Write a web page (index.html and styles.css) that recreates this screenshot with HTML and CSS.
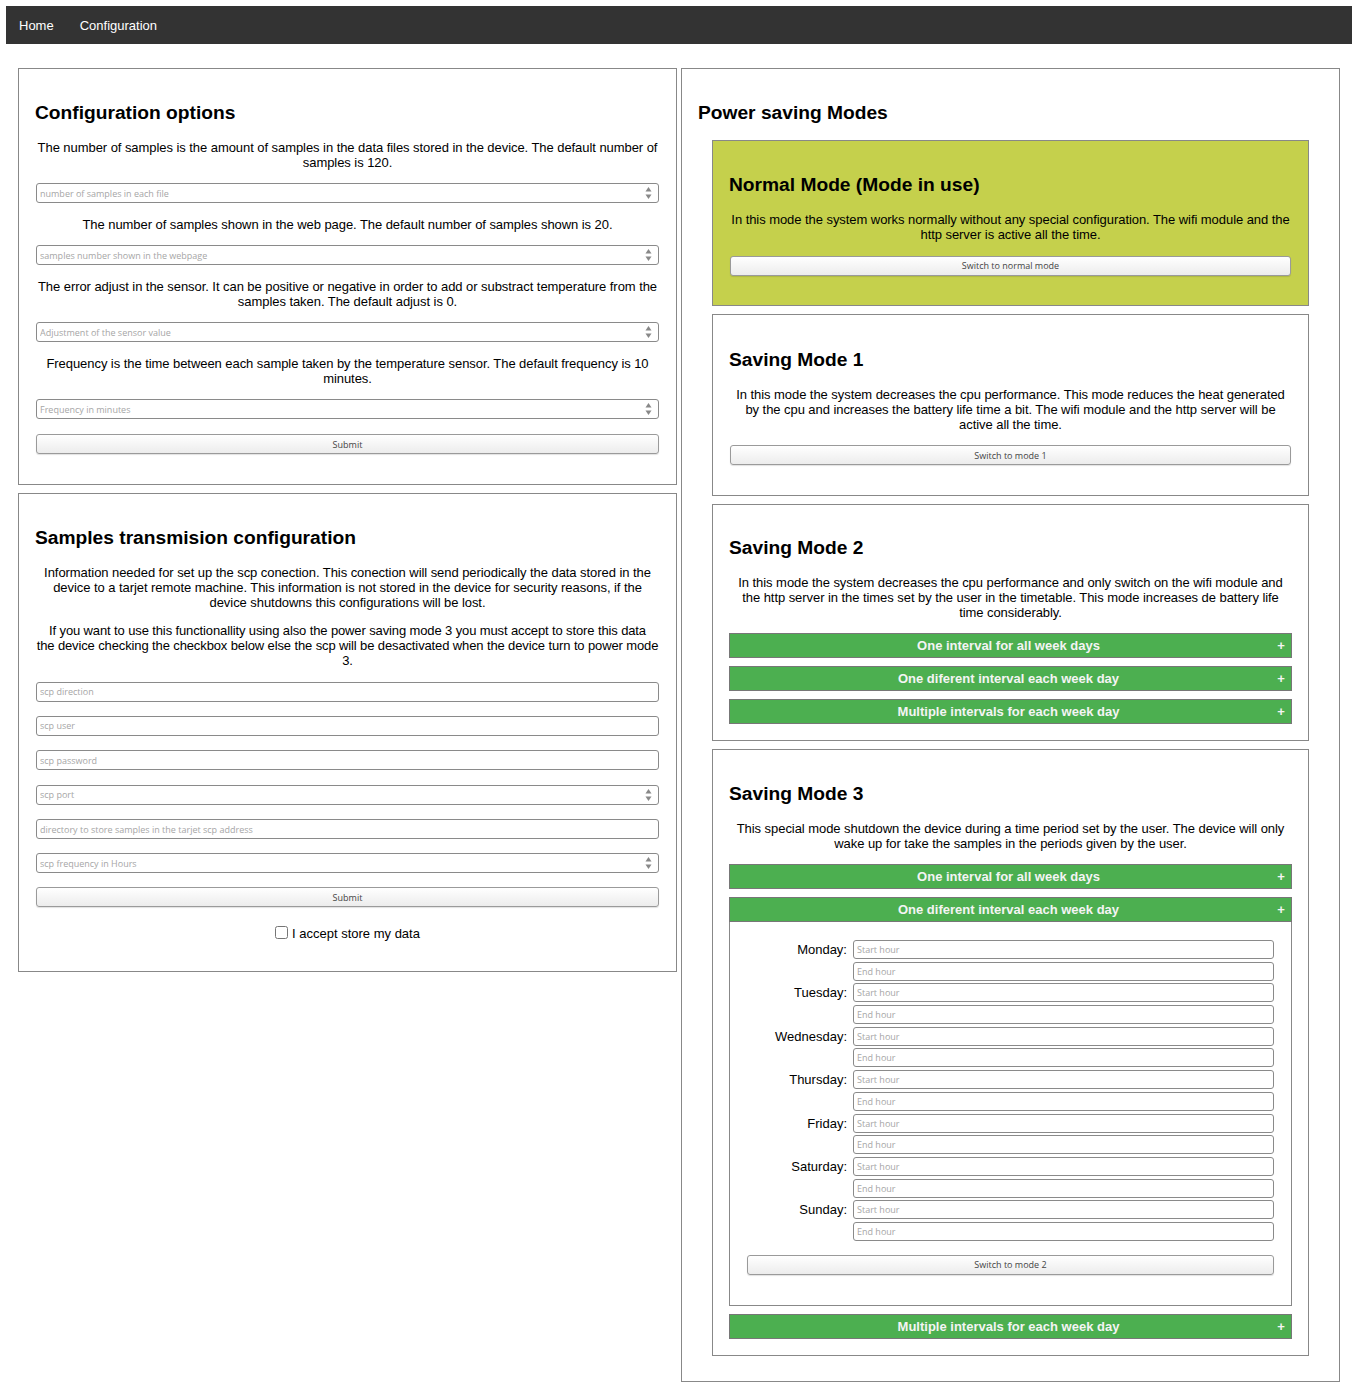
FILE: index.html
```html
<!DOCTYPE html>
<html lang="en">
<head>
<meta charset="utf-8">
<title>Configuration</title>
<link rel="stylesheet" href="styles.css">
</head>
<body>
<nav class="navbar">
  <a class="nav-link" href="#">Home</a>
  <a class="nav-link" href="#">Configuration</a>
</nav>

<main class="layout">
  <div class="column">
    <section class="panel panel-config">
      <h3 class="panel-title">Configuration options</h3>
      <p class="text">The number of samples is the amount of samples in the data files stored in the device. The default number of samples is 120.</p>
      <div class="field field-number"><input class="field-input" type="number" placeholder="number of samples in each file"><span class="spin"><svg width="7" height="14" viewBox="0 0 7 14"><path d="M3.5 1 L6.5 5.5 L0.5 5.5 Z" fill="#888"/><path d="M3.5 13 L6.5 8.5 L0.5 8.5 Z" fill="#888"/></svg></span></div>
      <p class="text">The number of samples shown in the web page. The default number of samples shown is 20.</p>
      <div class="field field-number"><input class="field-input" type="number" placeholder="samples number shown in the webpage"><span class="spin"><svg width="7" height="14" viewBox="0 0 7 14"><path d="M3.5 1 L6.5 5.5 L0.5 5.5 Z" fill="#888"/><path d="M3.5 13 L6.5 8.5 L0.5 8.5 Z" fill="#888"/></svg></span></div>
      <p class="text">The error adjust in the sensor. It can be positive or negative in order to add or substract temperature from the samples taken. The default adjust is 0.</p>
      <div class="field field-number"><input class="field-input" type="number" placeholder="Adjustment of the sensor value"><span class="spin"><svg width="7" height="14" viewBox="0 0 7 14"><path d="M3.5 1 L6.5 5.5 L0.5 5.5 Z" fill="#888"/><path d="M3.5 13 L6.5 8.5 L0.5 8.5 Z" fill="#888"/></svg></span></div>
      <p class="text">Frequency is the time between each sample taken by the temperature sensor. The default frequency is 10 minutes.</p>
      <div class="field field-number"><input class="field-input" type="number" placeholder="Frequency in minutes"><span class="spin"><svg width="7" height="14" viewBox="0 0 7 14"><path d="M3.5 1 L6.5 5.5 L0.5 5.5 Z" fill="#888"/><path d="M3.5 13 L6.5 8.5 L0.5 8.5 Z" fill="#888"/></svg></span></div>
      <button class="btn btn-submit" type="button">Submit</button>
    </section>

    <section class="panel panel-scp">
      <h3 class="panel-title">Samples transmision configuration</h3>
      <p class="text">Information needed for set up the scp conection. This conection will send periodically the data stored in the device to a tarjet remote machine. This information is not stored in the device for security reasons, if the device shutdowns this configurations will be lost.</p>
      <p class="text text-tight">If you want to use this functionallity using also the power saving mode 3 you must accept to store this data<br>the device checking the checkbox below else the scp will be desactivated when the device turn to power mode<br>3.</p>
      <div class="scp-fields">
        <div class="field"><input class="field-input" type="text" placeholder="scp direction"></div>
        <div class="field"><input class="field-input" type="text" placeholder="scp user"></div>
        <div class="field"><input class="field-input" type="password" placeholder="scp password"></div>
        <div class="field field-number"><input class="field-input" type="number" placeholder="scp port"><span class="spin"><svg width="7" height="14" viewBox="0 0 7 14"><path d="M3.5 1 L6.5 5.5 L0.5 5.5 Z" fill="#888"/><path d="M3.5 13 L6.5 8.5 L0.5 8.5 Z" fill="#888"/></svg></span></div>
        <div class="field"><input class="field-input" type="text" placeholder="directory to store samples in the tarjet scp address"></div>
        <div class="field field-number"><input class="field-input" type="number" placeholder="scp frequency in Hours"><span class="spin"><svg width="7" height="14" viewBox="0 0 7 14"><path d="M3.5 1 L6.5 5.5 L0.5 5.5 Z" fill="#888"/><path d="M3.5 13 L6.5 8.5 L0.5 8.5 Z" fill="#888"/></svg></span></div>
      </div>
      <button class="btn btn-submit" type="button">Submit</button>
      <label class="accept"><input class="accept-box" type="checkbox">I accept store my data</label>
    </section>
  </div>

  <section class="panel panel-power">
    <h3 class="panel-title">Power saving Modes</h3>

    <div class="mode mode-active">
      <h3 class="mode-title">Normal Mode (Mode in use)</h3>
      <p class="text">In this mode the system works normally without any special configuration. The wifi module and the http server is active all the time.</p>
      <button class="btn btn-mode" type="button">Switch to normal mode</button>
    </div>

    <div class="mode">
      <h3 class="mode-title">Saving Mode 1</h3>
      <p class="text">In this mode the system decreases the cpu performance. This mode reduces the heat generated by the cpu and increases the battery life time a bit. The wifi module and the http server will be active all the time.</p>
      <button class="btn btn-mode" type="button">Switch to mode 1</button>
    </div>

    <div class="mode mode-acc">
      <h3 class="mode-title">Saving Mode 2</h3>
      <p class="text">In this mode the system decreases the cpu performance and only switch on the wifi module and the http server in the times set by the user in the timetable. This mode increases de battery life time considerably.</p>
      <div class="accordion">
        <div class="acc-bar"><span class="acc-label">One interval for all week days</span><span class="acc-plus">+</span></div>
        <div class="acc-bar"><span class="acc-label">One diferent interval each week day</span><span class="acc-plus">+</span></div>
        <div class="acc-bar"><span class="acc-label">Multiple intervals for each week day</span><span class="acc-plus">+</span></div>
      </div>
    </div>

    <div class="mode mode-acc">
      <h3 class="mode-title">Saving Mode 3</h3>
      <p class="text">This special mode shutdown the device during a time period set by the user. The device will only wake up for take the samples in the periods given by the user.</p>
      <div class="accordion">
        <div class="acc-bar"><span class="acc-label">One interval for all week days</span><span class="acc-plus">+</span></div>
        <div class="acc-group">
          <div class="acc-bar"><span class="acc-label">One diferent interval each week day</span><span class="acc-plus">+</span></div>
          <div class="acc-content">
            <div class="days">
              <div class="day"><span class="day-label">Monday:</span><div class="day-inputs"><div class="field field-sm"><input class="field-input" type="text" placeholder="Start hour"></div><div class="field field-sm"><input class="field-input" type="text" placeholder="End hour"></div></div></div>
              <div class="day"><span class="day-label">Tuesday:</span><div class="day-inputs"><div class="field field-sm"><input class="field-input" type="text" placeholder="Start hour"></div><div class="field field-sm"><input class="field-input" type="text" placeholder="End hour"></div></div></div>
              <div class="day"><span class="day-label">Wednesday:</span><div class="day-inputs"><div class="field field-sm"><input class="field-input" type="text" placeholder="Start hour"></div><div class="field field-sm"><input class="field-input" type="text" placeholder="End hour"></div></div></div>
              <div class="day"><span class="day-label">Thursday:</span><div class="day-inputs"><div class="field field-sm"><input class="field-input" type="text" placeholder="Start hour"></div><div class="field field-sm"><input class="field-input" type="text" placeholder="End hour"></div></div></div>
              <div class="day"><span class="day-label">Friday:</span><div class="day-inputs"><div class="field field-sm"><input class="field-input" type="text" placeholder="Start hour"></div><div class="field field-sm"><input class="field-input" type="text" placeholder="End hour"></div></div></div>
              <div class="day"><span class="day-label">Saturday:</span><div class="day-inputs"><div class="field field-sm"><input class="field-input" type="text" placeholder="Start hour"></div><div class="field field-sm"><input class="field-input" type="text" placeholder="End hour"></div></div></div>
              <div class="day"><span class="day-label">Sunday:</span><div class="day-inputs"><div class="field field-sm"><input class="field-input" type="text" placeholder="Start hour"></div><div class="field field-sm"><input class="field-input" type="text" placeholder="End hour"></div></div></div>
            </div>
            <button class="btn btn-switch2" type="button">Switch to mode 2</button>
          </div>
        </div>
        <div class="acc-bar"><span class="acc-label">Multiple intervals for each week day</span><span class="acc-plus">+</span></div>
      </div>
    </div>
  </section>
</main>
</body>
</html>
```
FILE: styles.css
```css
* { box-sizing: border-box; }

body {
  margin: 6px;
  font-family: "Liberation Sans", Arial, sans-serif;
  font-size: 13px;
  color: #000;
  background: #fff;
}

.navbar {
  display: flex;
  height: 38px;
  background: #333;
}
.nav-link {
  display: block;
  padding: 1px 13px 0;
  line-height: 37px;
  color: #fff;
  text-decoration: none;
  font-size: 13px;
}

.layout {
  display: grid;
  grid-template-columns: 659px 659px;
  column-gap: 4px;
  align-items: start;
  padding: 24px 12px 0;
}

.column { display: flex; flex-direction: column; gap: 8px; }

.panel {
  border: 1px solid #888;
  background: #fff;
  padding: 32.5px 16px 30px;
}
.panel-scp { padding-bottom: 29px; }
.panel-power { padding-bottom: 25px; }

.panel-title, .mode-title {
  margin: 0 0 16px;
  font-size: 19.2px;
  line-height: 22px;
  font-weight: bold;
}

.text {
  margin: 0 0 13.5px;
  line-height: 15px;
  text-align: center;
  letter-spacing: -0.06px;
}
.text-tight { letter-spacing: -0.12px; }

.field {
  display: flex;
  align-items: center;
  height: 20px;
  margin: 0 1px;
  border: 1px solid #8a8a8a;
  border-radius: 3px;
  background: #fff;
}
.field-input {
  flex: 1;
  min-width: 0;
  height: 100%;
  border: 0;
  outline: 0;
  background: transparent;
  padding: 0 3px;
  font-family: "Open Sans", sans-serif;
  font-size: 9px;
  color: #333;
}
.field-input::placeholder { color: #a6a6a6; }
.field-input::-webkit-outer-spin-button,
.field-input::-webkit-inner-spin-button { -webkit-appearance: none; margin: 0; }
.field-input[type=number] { -moz-appearance: textfield; }
.spin { display: flex; width: 7px; margin-right: 6px; }

.panel-config .field + .text { margin-top: 13.5px; }

.scp-fields { display: flex; flex-direction: column; gap: 14.4px; }

.btn {
  display: block;
  width: calc(100% - 2px);
  margin: 0 1px;
  height: 20px;
  border: 1px solid #9a9a9a;
  border-radius: 3px;
  background: linear-gradient(#ffffff, #ececec);
  box-shadow: 0 1px 1px rgba(0,0,0,0.12);
  font-family: "Open Sans", sans-serif;
  font-size: 9px;
  color: #444;
  padding: 0;
  cursor: pointer;
}
.btn-submit { margin-top: 14px; }
.panel-config .btn-submit { margin-top: 15px; }

.accept {
  display: flex;
  justify-content: center;
  align-items: center;
  margin-top: 18.5px;
  line-height: 15px;
}
.accept-box { width: 13px; height: 13px; margin: 0 4px 3px 0; }

.mode {
  margin: 0 14px 8px;
  border: 1px solid #888;
  padding: 33.5px 16px 15.5px;
  background: #fff;
}
.mode:last-child { margin-bottom: 0; }
.mode-active { background: #c5d04c; }
.btn-mode { margin-bottom: 14px; }
.mode-acc { padding: 32.5px 16px 16px; }
.mode-acc .text { margin-bottom: 13px; }

.accordion { display: flex; flex-direction: column; gap: 8px; }
.acc-bar {
  display: flex;
  align-items: center;
  height: 25px;
  border: 1px solid #777;
  background: #4caf50;
  color: #f4f4f4;
  font-weight: bold;
  font-size: 13px;
  padding: 0 4px 0 0;
}
.acc-label { flex: 1; text-align: center; padding-left: 12px; }
.acc-plus { width: 12px; text-align: center; }

.acc-content {
  border: 1px solid #888;
  border-top: 0;
  padding: 18.5px 16px 30px;
}
.days { display: flex; flex-direction: column; gap: 2.7px; }
.day {
  display: grid;
  grid-template-columns: 101px 1fr;
  column-gap: 5px;
  align-items: start;
}
.day-label { text-align: right; line-height: 19px; }
.day-inputs { display: flex; flex-direction: column; gap: 2.7px; }
.field-sm { height: 19px; }
.btn-switch2 { margin-top: 14px; }
```
